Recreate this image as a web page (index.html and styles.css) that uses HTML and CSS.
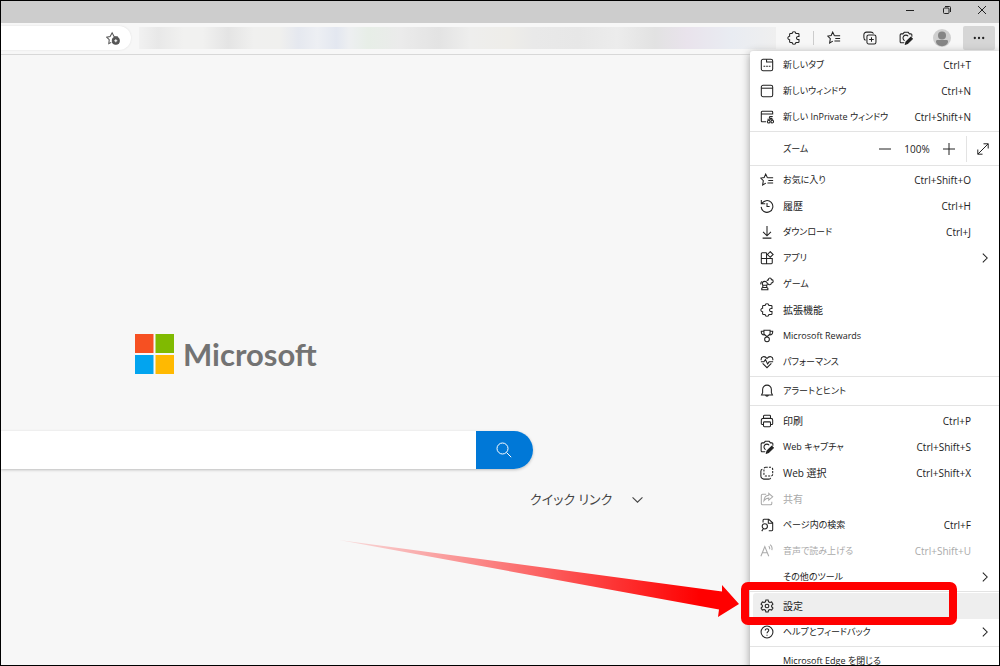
FILE: index.html
```html
<!DOCTYPE html>
<html lang="ja">
<head>
<meta charset="utf-8">
<title>Microsoft Edge</title>
<link rel="stylesheet" href="styles.css">
</head>
<body>
<svg class="sprite" aria-hidden="true">
  <symbol id="i-tab" viewBox="0 0 16 16"><rect x="1.5" y="1.5" width="13" height="13" rx="2"/><path d="M7.500 1.500V4.500h7M4 9.500h2M7 9.500h2M10 9.500h2"/></symbol>
  <symbol id="i-window" viewBox="0 0 16 16"><rect x="1.5" y="1.5" width="13" height="13" rx="2"/><path d="M1.500 4.800h13"/></symbol>
  <symbol id="i-private" viewBox="0 0 16 16"><path d="M7 13.500H2.500a1 1 0 0 1-1-1v-10a1 1 0 0 1 1-1h11a1 1 0 0 1 1 1V5M1.500 4.500h13M14.500 7.500h-2.500c-1.800 0-1.800 2 0 2h2M8.500 10.500h6.500"/><circle cx="10" cy="13.300" r="1.500"/><circle cx="14" cy="13.300" r="1.500"/></symbol>
  <symbol id="i-fav" viewBox="0 0 16 16"><path d="M8.500 5.500 6.500 1.300 4.800 5.200.8 5.800l3 3-.8 4.900 3.700-2.100M8.500 5.500H15M9.500 8.500H15M8.500 11.500H15"/></symbol>
  <symbol id="i-history" viewBox="0 0 16 16"><path d="M1.500 1v4.500H6M2 5.500a6.700 6.700 0 1 1-.7 3.500M8 4.500v4h3"/></symbol>
  <symbol id="i-down" viewBox="0 0 16 16"><path d="M8 1v11M3.500 7.800 8 12.300l4.500-4.500M3 15h10"/></symbol>
  <symbol id="i-apps" viewBox="0 0 16 16"><path d="M7.500 2h-5a1 1 0 0 0-1 1v10.500a1 1 0 0 0 1 1H13a1 1 0 0 0 1-1v-5H1.500M7.500 2v12.500M11.700.8l3.300 3.200-3.300 3.200-3.200-3.200z"/></symbol>
  <symbol id="i-games" viewBox="0 0 16 16"><path d="M2 14.500h7v-1.700l-1.300-.8V9.500c1.500-2 .3-4.500-2.200-4.500S2 7 3.200 9.500V12L2 12.800zM3.200 9.500h4.500M3.200 12h4.500M1 8.500c-.3-1.500.3-3 1.500-3.500M8 4.500c.3-1 1-1.300 1.500-1.200C9.500.5 13 .5 13 3c2.800 0 2.800 3.800 0 3.800 0 2.400-3.200 2.600-3.700.7"/></symbol>
  <symbol id="i-puzzle" viewBox="0 0 16 16"><path d="M5.800 2.800a2.200 2 0 0 1 4.400 0H12.700a1 1 0 0 1 1 1v2.400h-1a1.800 1.800 0 1 0 0 3.600h1v2.400a1 1 0 0 1-1 1h-2.500a2.200 2 0 0 1-4.400 0H4a1 1 0 0 1-1-1V10a2 2 0 0 1 0-4V3.800a1 1 0 0 1 1-1z"/></symbol>
  <symbol id="i-rewards" viewBox="0 0 16 16"><path d="M4.500 1.500h7v4.200L8 8.800 4.500 5.700zM4.500 2.500h-3c-.3 2.800 1.200 4.500 3.800 4.200M11.500 2.500h3c.3 2.800-1.200 4.500-3.800 4.200"/><circle cx="8" cy="11.800" r="2.700"/></symbol>
  <symbol id="i-heart" viewBox="0 0 16 16"><path d="M1.400 6C.6 1.600 5.500.5 8 4c2.500-3.500 7.400-2.400 6.600 2M3 9.500l5 5 5-5M1 7.800h3.500l1.700-2.600 2.500 5 1.700-2.400H15"/></symbol>
  <symbol id="i-bell" viewBox="0 0 16 16"><path d="M8 1.300a5 5 0 0 0-5 5V10l-1.200 2.500h12.400L13 10V6.300a5 5 0 0 0-5-5zM6.200 12.700a1.900 1.900 0 0 0 3.600 0"/></symbol>
  <symbol id="i-print" viewBox="0 0 16 16"><path d="M4 5V2.500a1 1 0 0 1 1-1h6a1 1 0 0 1 1 1V5M4 12H2.500a1 1 0 0 1-1-1V7a2 2 0 0 1 2-2h9a2 2 0 0 1 2 2v4a1 1 0 0 1-1 1H12"/><rect x="4" y="9" width="8" height="5.500" rx="1"/></symbol>
  <symbol id="i-capture" viewBox="0 0 16 16"><path d="M6 13.500H2.500a1.200 1.200 0 0 1-1.200-1.200V4.500a1.200 1.200 0 0 1 1.200-1.200h2L6 1.500h4.500l1.500 1.800h1.500a1.200 1.200 0 0 1 1.200 1.200v2M10.500 6A3.300 3.300 0 1 0 6.500 11"/><path class="solid" d="m8 12.500 5.500-5.300 1.800 1.700-5.500 5.500-2.500.8z"/></symbol>
  <symbol id="i-select" viewBox="0 0 16 16"><path d="M2.700 3.800C1.500 4 1 5 1 6v5.500A3.500 3.500 0 0 0 4.500 15H10c1 0 2-.5 2.200-1.500"/><rect x="4.500" y="1.500" width="10" height="10" rx="2" stroke-dasharray="2.400 1.300"/></symbol>
  <symbol id="i-share" viewBox="0 0 16 16"><path d="M7 2.500H3a1.500 1.500 0 0 0-1.500 1.500v9A1.500 1.500 0 0 0 3 14.500h9a1.500 1.500 0 0 0 1.500-1.500v-2M10 1.500 14.500 5.500 10 9.300V7c-2.500 0-4 .8-5.500 3 .3-3.500 2-6 5.500-6.200z"/></symbol>
  <symbol id="i-find" viewBox="0 0 16 16"><path d="M3.500 5V2.500a1 1 0 0 1 1-1H10l4.500 4v8a1 1 0 0 1-1 1H10M9.500 1.500V6h5"/><circle cx="5.500" cy="9.500" r="3"/><path d="m4 12-2 3"/></symbol>
  <symbol id="i-aloud" viewBox="0 0 16 16"><path d="M1 14 5.500 3 10 14M2.800 10h5.400M10 2.500c1 1 1.300 2 1 3.500M11.500.8c2 1.500 2.700 4 2 6.200"/></symbol>
  <symbol id="i-gear" viewBox="0 0 16 16"><path d="M6.700 1.200h2.600l.5 2 1.500.8 2-.6 1.500 2.400-1.500 1.500v1.500l1.500 1.500-1.500 2.300-2-.6-1.500.8-.5 2H6.700l-.5-2-1.500-.8-2 .6-1.500-2.300 1.500-1.500V7.300L1.200 5.800l1.500-2.400 2 .6 1.500-.8z"/><circle cx="8" cy="8" r="2.100"/></symbol>
  <symbol id="i-help" viewBox="0 0 16 16"><circle cx="8" cy="8" r="6.800"/><path d="M6 6.300c0-2.700 4.200-2.500 4 0-.1 1.300-2 1.500-2 3.200M8 11v1.300"/></symbol>
  <symbol id="i-collect" viewBox="0 0 16 16"><path d="M3 10.500C1.800 10.200 1 9 1 7.500V4.300a3 3 0 0 1 3-3h5C10.500 1.300 11.500 2 12 3"/><rect x="4.500" y="4.500" width="10.300" height="10.300" rx="2"/><path d="M9.700 7v5.300M7 9.700h5.300"/></symbol>
  <symbol id="i-chevron" viewBox="0 0 16 16"><path d="m5.500 3 5 5-5 5"/></symbol>
</svg>

<div class="window">
  <header class="titlebar">
    <button class="titlebar__button" aria-label="最小化"><svg class="glyph" viewBox="0 0 10 10"><path d="M1 5.500h8"/></svg></button>
    <button class="titlebar__button" aria-label="元に戻す"><svg class="glyph" viewBox="0 0 10 10"><rect x="1.500" y="3" width="5.500" height="5.500" rx="1"/><path d="M3 1.500h4.500a1 1 0 0 1 1 1V7"/></svg></button>
    <button class="titlebar__button" aria-label="閉じる"><svg class="glyph" viewBox="0 0 10 10"><path d="m1 1 8 8M9 1 1 9"/></svg></button>
  </header>

  <div class="toolbar">
    <div class="address">
      <input class="address__input" type="text" aria-label="アドレス">
      <button class="address__star" aria-label="お気に入りに追加"><svg class="icon" viewBox="0 0 16 16"><path d="m6 13-2.800 1.500.5-4.500-3-3 4-.8L7 2l2.200 4.200 4.500.6"/><circle class="solid" cx="11.200" cy="11.200" r="4"/><path class="cut" d="M9.500 11.200h3.400M11.200 9.500v3.400"/></svg></button>
    </div>
    <div class="bookmarks"></div>
    <button class="tool" aria-label="拡張機能"><svg class="icon"><use href="#i-puzzle"/></svg></button>
    <span class="toolbar__divider"></span>
    <button class="tool" aria-label="お気に入り"><svg class="icon"><use href="#i-fav"/></svg></button>
    <button class="tool" aria-label="コレクション"><svg class="icon"><use href="#i-collect"/></svg></button>
    <button class="tool" aria-label="Web キャプチャ"><svg class="icon"><use href="#i-capture"/></svg></button>
    <button class="tool" aria-label="プロファイル"><svg class="avatar" viewBox="0 0 18 18"><circle cx="9" cy="9" r="9" fill="#cfcfcf"/><circle cx="9" cy="6.500" r="4" fill="#858585"/><path d="M3 12.500c0-1 .6-1.500 1.500-1.500h9c1 0 1.500.5 1.500 1.500 0 2.500-2.500 4.700-6 4.700s-6-2.200-6-4.700z" fill="#858585"/></svg></button>
    <button class="tool tool--open" aria-label="設定など" aria-expanded="true"><svg class="icon" viewBox="0 0 16 16"><g class="solid"><circle cx="3.200" cy="8" r=".7"/><circle cx="8" cy="8" r=".7"/><circle cx="12.800" cy="8" r=".7"/></g></svg></button>
  </div>

  <main class="page">
    <div class="logo">
      <svg class="logo__mark" viewBox="0 0 39 40"><path fill="#f65022" d="M0 0h18.500v19H0z"/><path fill="#80ba01" d="M20.500 0H39v19H20.500z"/><path fill="#02a4ef" d="M0 21h18.500v19H0z"/><path fill="#ffb901" d="M20.500 21H39v19H20.500z"/></svg>
      <span class="logo__name">Microsoft</span>
    </div>
    <form class="search">
      <input class="search__input" type="text" aria-label="Web を検索">
      <button class="search__button" type="button" aria-label="検索"><svg class="search__icon" viewBox="0 0 16 16"><circle cx="6.500" cy="6.500" r="5.500"/><path d="m10.500 10.500 4.700 4.700"/></svg></button>
    </form>
    <button class="quick">クイック リンク<svg class="quick__chevron" viewBox="0 0 10 10"><path d="m.5 3 4.500 4.500L9.500 3"/></svg></button>
  </main>

  <nav class="menu" aria-label="設定など">
    <button class="item"><svg class="icon"><use href="#i-tab"/></svg><span class="item__label">新しいタブ</span><kbd class="item__key">Ctrl+T</kbd></button>
    <button class="item"><svg class="icon"><use href="#i-window"/></svg><span class="item__label">新しいウィンドウ</span><kbd class="item__key">Ctrl+N</kbd></button>
    <button class="item"><svg class="icon"><use href="#i-private"/></svg><span class="item__label">新しい InPrivate ウィンドウ</span><kbd class="item__key">Ctrl+Shift+N</kbd></button>
    <hr class="rule">
    <div class="zoom">
      <span class="zoom__label">ズーム</span>
      <button class="zoom__button" aria-label="縮小"><svg class="zoom__icon" viewBox="0 0 12 12"><path d="M0 6h12"/></svg></button>
      <span class="zoom__value">100%</span>
      <button class="zoom__button" aria-label="拡大"><svg class="zoom__icon" viewBox="0 0 12 12"><path d="M0 6h12M6 0v12"/></svg></button>
      <button class="zoom__full" aria-label="全画面表示"><svg class="zoom__icon" viewBox="0 0 12 12"><path d="m.8 11.200 10.400-10.400M6.500.8h4.700v4.700M.8 6.500v4.700h4.700"/></svg></button>
    </div>
    <hr class="rule">
    <button class="item"><svg class="icon"><use href="#i-fav"/></svg><span class="item__label">お気に入り</span><kbd class="item__key">Ctrl+Shift+O</kbd></button>
    <button class="item"><svg class="icon"><use href="#i-history"/></svg><span class="item__label item__label--kanji">履歴</span><kbd class="item__key">Ctrl+H</kbd></button>
    <button class="item"><svg class="icon"><use href="#i-down"/></svg><span class="item__label">ダウンロード</span><kbd class="item__key">Ctrl+J</kbd></button>
    <button class="item item--sub"><svg class="icon"><use href="#i-apps"/></svg><span class="item__label">アプリ</span><svg class="item__chevron"><use href="#i-chevron"/></svg></button>
    <button class="item"><svg class="icon"><use href="#i-games"/></svg><span class="item__label">ゲーム</span></button>
    <button class="item"><svg class="icon"><use href="#i-puzzle"/></svg><span class="item__label item__label--kanji">拡張機能</span></button>
    <button class="item"><svg class="icon"><use href="#i-rewards"/></svg><span class="item__label">Microsoft Rewards</span></button>
    <button class="item"><svg class="icon"><use href="#i-heart"/></svg><span class="item__label">パフォーマンス</span></button>
    <hr class="rule">
    <button class="item"><svg class="icon"><use href="#i-bell"/></svg><span class="item__label">アラートとヒント</span></button>
    <hr class="rule rule--wide">
    <button class="item"><svg class="icon"><use href="#i-print"/></svg><span class="item__label item__label--kanji">印刷</span><kbd class="item__key">Ctrl+P</kbd></button>
    <button class="item"><svg class="icon"><use href="#i-capture"/></svg><span class="item__label">Web キャプチャ</span><kbd class="item__key">Ctrl+Shift+S</kbd></button>
    <button class="item"><svg class="icon"><use href="#i-select"/></svg><span class="item__label item__label--kanji">Web 選択</span><kbd class="item__key">Ctrl+Shift+X</kbd></button>
    <button class="item" disabled><svg class="icon"><use href="#i-share"/></svg><span class="item__label item__label--kanji">共有</span></button>
    <button class="item"><svg class="icon"><use href="#i-find"/></svg><span class="item__label">ページ内の検索</span><kbd class="item__key">Ctrl+F</kbd></button>
    <button class="item" disabled><svg class="icon"><use href="#i-aloud"/></svg><span class="item__label">音声で読み上げる</span><kbd class="item__key">Ctrl+Shift+U</kbd></button>
    <button class="item item--sub"><span class="icon"></span><span class="item__label">その他のツール</span><svg class="item__chevron"><use href="#i-chevron"/></svg></button>
    <hr class="rule">
    <div class="callout">
      <button class="item item--active"><svg class="icon"><use href="#i-gear"/></svg><span class="item__label item__label--kanji">設定</span></button>
      <svg class="callout__arrow" viewBox="0 0 400 80" aria-hidden="true">
        <defs><linearGradient id="fade"><stop offset="0" stop-color="#f00" stop-opacity=".1"/><stop offset=".9" stop-color="#f00"/></linearGradient></defs>
        <path fill="url(#fade)" d="M0 0 383 51.500V45l17 19-21 13 1-7.500z"/>
      </svg>
      <span class="callout__frame"></span>
    </div>
    <button class="item item--sub"><svg class="icon"><use href="#i-help"/></svg><span class="item__label">ヘルプとフィードバック</span><svg class="item__chevron"><use href="#i-chevron"/></svg></button>
    <hr class="rule">
    <button class="item"><span class="icon"></span><span class="item__label">Microsoft Edge を閉じる</span></button>
  </nav>
</div>
</body>
</html>
```

FILE: styles.css
```css
* { box-sizing: border-box; }

body {
  margin: 0;
  color: #222;
  font: 10px/16px "Open Sans", "Noto Sans CJK JP", sans-serif;
  font-feature-settings: "palt";
}

button, input, kbd {
  margin: 0;
  padding: 0;
  border: 0;
  background: none;
  color: inherit;
  font: inherit;
  font-feature-settings: inherit;
}

svg {
  fill: none;
  stroke: currentColor;
}

.sprite { position: absolute; width: 0; height: 0; }
.solid { fill: currentColor; }
.cut { stroke: #fff; }

.icon {
  flex: none;
  width: 14px;
  height: 14px;
  stroke-width: 1.2;
}

.window {
  position: relative;
  display: flex;
  flex-direction: column;
  height: 100vh;
  overflow: hidden;
  border: 1px solid #000;
  background: #f7f7f7;
}

.titlebar {
  display: flex;
  flex: none;
  justify-content: flex-end;
  height: 22px;
  background: #cdcdcd;
}

.titlebar__button {
  display: grid;
  place-items: center;
  width: 37px;
  height: 18px;
}
.titlebar__button:last-child { width: 34px; }

.glyph { width: 10px; height: 10px; }

.toolbar {
  display: flex;
  flex: none;
  align-items: center;
  height: 32px;
  padding: 0 4px 1px 0;
  border-bottom: 1px solid #d8d8d8;
}

.address {
  display: flex;
  align-items: center;
  width: 130px;
  height: 24px;
  padding-right: 11px;
  border-radius: 0 12px 12px 0;
  background: #fff;
  box-shadow: 0 0 2px #ddd;
}
.address__input { flex: 1; min-width: 0; }
.address__star { display: flex; color: #555; }

.bookmarks {
  flex: 1;
  height: 22px;
  margin-left: 8px;
  background: linear-gradient(90deg, #f1f1f1, #e8e8e8 3%, #f1f1f0 7%, #f1f1f0 10%, #e4e4e4 14%, #f0f0ef 18%, #f0f0ee 22%, #e5e8ef 25%, #edeff3 28%, #e3e7f0 31%, #edeff1 33%, #e7eee7 36%, #ebebeb 41%, #e3e3e3 47%, #eeeeed 52%, #eeede9 58%, #e9e9e9 62%, #e7e7e7 69%, #ececec 75%, #e2e2e2 81%, #e9e3ec 86%, #e9ecf2 93%, #efefef);
}

.toolbar__divider { width: 1px; height: 14px; margin: 0 2px 0 1px; background: #ccc; }

.tool {
  display: grid;
  place-items: center;
  flex: none;
  width: 36px;
  height: 24px;
}
.tool--open { width: 32px; margin-left: 3px; border-radius: 2px; background: #d6d6d6; }
.avatar { width: 18px; height: 18px; stroke: none; }

.page { padding-top: 279px; }

.logo {
  display: flex;
  align-items: center;
  gap: 9px;
  height: 40px;
  margin-left: 134px;
  color: #737373;
  font: 700 31px/40px Lato, sans-serif;
}
.logo__mark { width: 39px; height: 40px; stroke: none; }

.search {
  display: flex;
  width: 53.3%;
  height: 38px;
  margin-top: 57px;
  overflow: hidden;
  border-radius: 0 19px 19px 0;
  background: #fff;
  box-shadow: 0 1px 3px #bbb;
}
.search__input { flex: 1; min-width: 0; padding: 0 12px; font-size: 14px; }
.search__button {
  display: grid;
  place-items: center;
  width: 57px;
  background: #0078d7;
  color: #fff;
}
.search__icon { width: 16px; height: 16px; }

.quick {
  display: flex;
  align-items: center;
  gap: 20px;
  margin: 20px 0 0 529px;
  color: #444;
  font-size: 13px;
  line-height: 20px;
}
.quick__chevron { width: 11px; height: 11px; }

.menu {
  position: absolute;
  top: 50px;
  right: 0;
  width: 249px;
  padding-top: 1px;
  border-radius: 3px 0 0 0;
  background: #fff;
  box-shadow: 0 2px 8px #999;
}

.item {
  display: flex;
  align-items: center;
  width: 100%;
  height: 26px;
  padding: 0 28px 0 10px;
  text-align: left;
  white-space: nowrap;
}
.item:disabled { color: #aaa; }
.item--sub { padding-right: 7px; }
.item__label { flex: 1; margin-left: 9px; font-size: 9px; }
.item__label--kanji { font-size: 10px; }
.item__chevron { width: 14px; height: 14px; stroke-width: 1.2; }

.rule { height: 1px; margin: 1px 0; border: 0; background: #e3e3e3; }
.rule--wide { margin-bottom: 2px; }

.zoom {
  display: flex;
  align-items: center;
  height: 31px;
  padding-left: 33px;
}
.zoom__label { flex: 1; font-size: 9px; }
.zoom__button { display: grid; place-items: center; width: 26px; height: 24px; }
.zoom__icon { width: 12px; height: 12px; }
.zoom__value { width: 38px; text-align: center; }
.zoom__full {
  display: grid;
  place-items: center;
  width: 33px;
  height: 26px;
  margin-left: 4px;
  border-left: 1px solid #e3e3e3;
}

.callout { position: relative; }
.item--active {
  width: auto;
  min-width: calc(100% - 3px);
  margin-left: 3px;
  padding-left: 7px;
  border-radius: 3px 0 0 3px;
  background: #eee;
}
.callout__frame {
  position: absolute;
  inset: -11px 42px -6px -9px;
  border: 8px solid #f00;
  border-radius: 7px;
}
.callout__arrow {
  position: absolute;
  top: -53px;
  right: 260px;
  width: 400px;
  height: 80px;
  stroke: none;
}
```
